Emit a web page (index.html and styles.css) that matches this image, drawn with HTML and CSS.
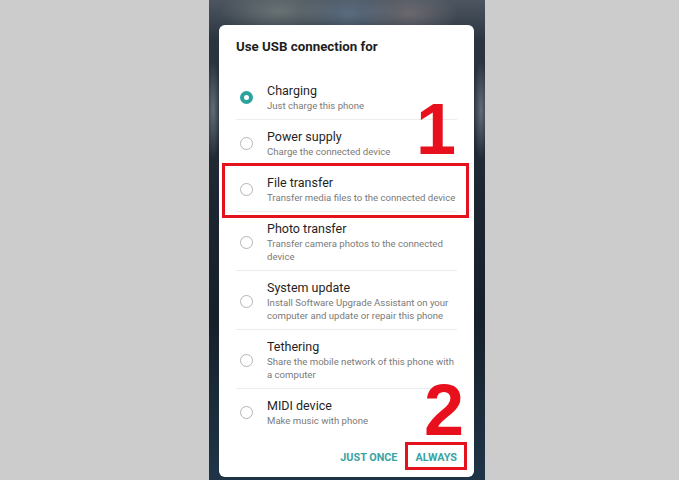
FILE: index.html
```html
<!DOCTYPE html>
<html>
<head>
<meta charset="utf-8">
<link rel="stylesheet" href="styles.css">
</head>
<body>
<div class="page">
  <div class="phone">
    <div class="dialog">
      <h1 class="title">Use USB connection for</h1>
      <ul class="options">
        <li class="option selected">
          <span class="radio"></span>
          <div class="text"><div class="name">Charging</div><div class="desc">Just charge this phone</div></div>
        </li>
        <li class="option">
          <span class="radio"></span>
          <div class="text"><div class="name">Power supply</div><div class="desc">Charge the connected device</div></div>
        </li>
        <li class="option">
          <span class="radio"></span>
          <div class="text"><div class="name">File transfer</div><div class="desc">Transfer media files to the connected device</div></div>
        </li>
        <li class="option">
          <span class="radio"></span>
          <div class="text"><div class="name">Photo transfer</div><div class="desc">Transfer camera photos to the connected<br>device</div></div>
        </li>
        <li class="option">
          <span class="radio"></span>
          <div class="text"><div class="name">System update</div><div class="desc">Install Software Upgrade Assistant on your<br>computer and update or repair this phone</div></div>
        </li>
        <li class="option">
          <span class="radio"></span>
          <div class="text"><div class="name">Tethering</div><div class="desc">Share the mobile network of this phone with<br>a computer</div></div>
        </li>
        <li class="option">
          <span class="radio"></span>
          <div class="text"><div class="name">MIDI device</div><div class="desc">Make music with phone</div></div>
        </li>
      </ul>
      <div class="actions">
        <span class="btn">JUST ONCE</span>
        <span class="btn">ALWAYS</span>
      </div>
    </div>
  </div>
  <div class="mark box1"></div>
  <div class="mark box2"></div>
  <div class="num num1">1</div>
  <div class="num num2">2</div>
</div>
</body>
</html>
```
FILE: styles.css
```css
html, body {
  margin: 0;
  padding: 0;
}
body {
  background: #cccccc;
  font-family: Roboto, "Liberation Sans", sans-serif;
}
.page {
  position: relative;
  width: 679px;
  height: 480px;
  overflow: hidden;
}
.phone {
  margin-left: 209px;
  width: 276px;
  height: 480px;
  box-sizing: border-box;
  padding: 25px 11px 0 10px;
  background:
    radial-gradient(ellipse 60px 22px at 70px 12px, rgba(150,160,150,0.45), transparent),
    radial-gradient(ellipse 50px 22px at 140px 14px, rgba(120,150,180,0.45), transparent),
    radial-gradient(ellipse 50px 22px at 200px 14px, rgba(170,150,150,0.4), transparent),
    radial-gradient(ellipse 8px 50px at 4px 110px, rgba(140,150,160,0.6), transparent),
    radial-gradient(ellipse 8px 50px at 272px 110px, rgba(140,150,160,0.6), transparent),
    linear-gradient(180deg, #4d5660 0px, #2b3540 40px, #1c2530 200px, #16202b 320px, #1f3547 480px);
}
.dialog {
  background: #ffffff;
  border-radius: 6px;
  height: 452px;
  box-sizing: border-box;
  padding: 0 12px 0 17px;
  display: flex;
  flex-direction: column;
}
.title {
  margin: 0;
  padding: 14px 0 0;
  height: 48px;
  box-sizing: border-box;
  font-size: 13.3px;
  line-height: 16px;
  font-weight: 700;
  color: #1e1e1e;
}
.options {
  list-style: none;
  margin: 0 5px 0 0;
  padding: 0;
}
.option {
  display: flex;
  align-items: center;
  padding: 9px 0 7px;
  border-top: 1px solid #ececec;
}
.option:first-child {
  border-top: 1px solid transparent;
}
.radio {
  flex: none;
  width: 13px;
  height: 13px;
  box-sizing: border-box;
  border: 1.5px solid #b5b5b5;
  border-radius: 50%;
  margin: 0 14px 0 4px;
}
.selected .radio {
  border: 4.5px solid #2aa39c;
}
.text {
  flex: 1;
  margin-right: -8px;
}
.name {
  font-size: 12.5px;
  line-height: 16px;
  color: #1f1f1f;
}
.desc {
  font-size: 9.6px;
  line-height: 13px;
  color: #7a7a7a;
  white-space: nowrap;
}
.actions {
  display: flex;
  justify-content: flex-end;
  gap: 18px;
  margin: 17px 5px 0 0;
}
.btn {
  font-size: 10.8px;
  line-height: 14px;
  font-weight: 700;
  color: #3aa3a3;
}
.mark {
  position: absolute;
  border: 3px solid #e3121d;
  box-sizing: border-box;
}
.box1 {
  left: 222px;
  top: 163px;
  width: 247px;
  height: 55px;
}
.box2 {
  left: 405px;
  top: 442px;
  width: 62px;
  height: 28px;
}
.num {
  position: absolute;
  font-family: "Liberation Sans", Arial, sans-serif;
  font-weight: 700;
  color: #e8101c;
  font-size: 72px;
  line-height: 72px;
}
.num1 {
  left: 416px;
  top: 93px;
}
.num2 {
  left: 424px;
  top: 374px;
}
```
